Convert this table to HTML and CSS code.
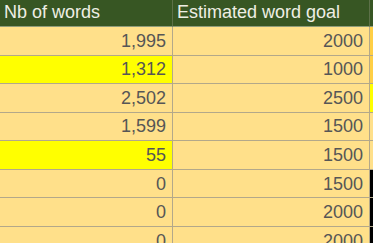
FILE: index.html
```html
<!DOCTYPE html>
<html>
<head>
<meta charset="utf-8">
<link rel="stylesheet" href="styles.css">
</head>
<body>
<div class="sheet">
  <div class="cell head c1">Nb of words</div>
  <div class="cell head c2">Estimated word goal</div>
  <div class="cell head c3"></div>

  <div class="cell num c1">1,995</div>
  <div class="cell num c2">2000</div>
  <div class="cell c3 gold"></div>

  <div class="cell num c1 yellow">1,312</div>
  <div class="cell num c2">1000</div>
  <div class="cell c3 gold"></div>

  <div class="cell num c1">2,502</div>
  <div class="cell num c2">2500</div>
  <div class="cell c3 yellow"></div>

  <div class="cell num c1">1,599</div>
  <div class="cell num c2">1500</div>
  <div class="cell c3"></div>

  <div class="cell num c1 yellow">55</div>
  <div class="cell num c2">1500</div>
  <div class="cell c3"></div>

  <div class="cell num c1">0</div>
  <div class="cell num c2">1500</div>
  <div class="cell c3 black"></div>

  <div class="cell num c1">0</div>
  <div class="cell num c2">2000</div>
  <div class="cell c3 black"></div>

  <div class="cell num c1">0</div>
  <div class="cell num c2">2000</div>
  <div class="cell c3 black"></div>
</div>
</body>
</html>
```
FILE: styles.css
```css
html, body {
  margin: 0;
  padding: 0;
  background: #ffe08a;
  overflow: hidden;
}
.sheet {
  display: grid;
  grid-template-columns: 173px 197px 20px;
  grid-template-rows: 27px repeat(8, 28.57px);
  font-family: "Liberation Sans", Arial, sans-serif;
  font-size: 18px;
  width: 390px;
}
.cell {
  box-sizing: border-box;
  border-right: 1px solid #b3a88a;
  border-bottom: 1px solid #b3a88a;
  background: #ffe08a;
  color: #565656;
  display: flex;
  align-items: center;
  white-space: nowrap;
  overflow: hidden;
}
.head {
  background: #375623;
  color: #eeeee4;
  font-size: 18px;
  padding-left: 4px;
  border-right-color: #5c7048;
  border-bottom-color: #8e9c7a;
  padding-bottom: 1px;
}
.num {
  justify-content: flex-end;
  padding-right: 6px;
  padding-top: 1px;
}
.yellow { background: #ffff00; }
.gold { background: #ffcf45; }
.black { background: #000; }
.c3 { border-right: none; }
```
